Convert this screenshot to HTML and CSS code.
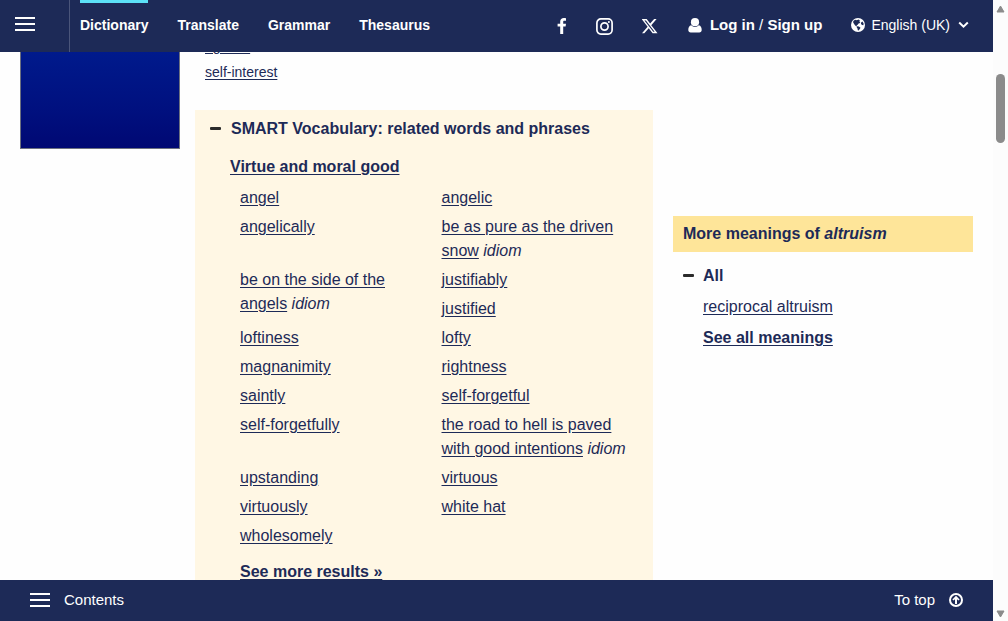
FILE: index.html
```html
<!DOCTYPE html>
<html lang="en">
<head>
<meta charset="utf-8">
<meta name="viewport" content="width=device-width, initial-scale=1">
<title>altruism | Dictionary</title>
<link rel="stylesheet" href="styles.css">
</head>
<body>
<div class="page">
  <header class="header">
    <button class="menu-button" type="button" aria-label="Open menu"><span class="bars"></span></button>
    <nav class="nav">
      <a class="nav-link active" href="#">Dictionary</a>
      <a class="nav-link" href="#">Translate</a>
      <a class="nav-link" href="#">Grammar</a>
      <a class="nav-link" href="#">Thesaurus</a>
    </nav>
    <div class="social">
      <a class="social-link" href="#" aria-label="Facebook"><svg width="10" height="16" viewBox="0 0 10 16"><path fill="currentColor" d="M9 .2v2.600H7.500C6.400 2.800 6.200 3.300 6.200 4v1.700H9l-.4 2.800H6.200V16H3.200V8.500H.6V5.700h2.600V3.500C3.200 1.200 4.700 0 6.800 0 7.800 0 8.700.1 9 .2z"/></svg></a>
      <a class="social-link" href="#" aria-label="Instagram"><svg width="17" height="17" viewBox="0 0 17 17" fill="none" stroke="currentColor"><rect x="0.900" y="0.900" width="15.200" height="15.200" rx="4" stroke-width="1.700"/><circle cx="8.500" cy="8.500" r="3.600" stroke-width="1.700"/><circle cx="12.900" cy="4.100" r="1" fill="currentColor" stroke="none"/></svg></a>
      <a class="social-link" href="#" aria-label="X"><svg width="16" height="16" viewBox="0 0 24 24"><path fill="currentColor" d="M18.200 1.500h3.700l-8 9.200L23.300 23h-7.400l-5.800-7.600L3.500 23H-.2l8.600-9.800L-.6 1.500H7l5.200 6.900zm-1.300 19.300h2L5.800 3.600H3.600z"/></svg></a>
    </div>
    <a class="login" href="#">
      <svg width="14" height="15" viewBox="0 0 14 15"><circle cx="7" cy="4.200" r="4.100" fill="currentColor"/><path fill="currentColor" d="M3.200 7.300a5 5 0 0 0 7.600 0c2.100.4 2.900 2.500 2.900 4.700 0 1.500-1 2.500-2.400 2.500H2.700C1.300 14.500.3 13.500.3 12c0-2.200.8-4.300 2.900-4.700z"/></svg>
      <span>Log in <span class="slash">/</span> Sign up</span>
    </a>
    <button class="language" type="button">
      <svg width="14" height="14" viewBox="0 0 14 14"><circle cx="7" cy="7" r="7" fill="currentColor"/><path class="land" d="M2.800 2.600 4.500 1.800l1.200.5L7.500 1.400l1.400 1-.5 1.300.9.600-1.200 1.300-1 .2-.5 1.200-1.200-.1.800 1.200-.9.300-1.500-1.300-1-1.500-.8-1.500z"/><path class="land" d="m6.200 8.300 1.700.2 1.600 1.200-.7 1.400-1.200 1.400-.8-.2-.3-1.800-.8-1.100z"/><path class="land" d="m10.100 4.500 1.300-.9 1.200 1.900-.2 1.700-1.300-.3-1.100-.8z"/></svg>
      <span>English (UK)</span>
      <svg class="chevron" width="11" height="8" viewBox="0 0 11 8"><path d="M1.200 1.500 5.500 5.700 9.800 1.500" fill="none" stroke="currentColor" stroke-width="2"/></svg>
    </button>
  </header>

  <main class="main">
    <div class="ad" role="img" aria-label="Advertisement"></div>
    <article class="article">
      <ul class="synonyms">
        <li><a href="#">egoism</a></li>
        <li><a href="#">self-interest</a></li>
      </ul>
      <section class="smart">
        <h2 class="toggle-title"><span class="minus"></span>SMART Vocabulary: related words and phrases</h2>
        <h3 class="topic"><a href="#">Virtue and moral good</a></h3>
        <ul class="words">
          <li><a href="#">angel</a></li>
          <li><a href="#">angelic</a></li>
          <li><a href="#">angelically</a></li>
          <li><a href="#">be as pure as the driven snow</a> <i>idiom</i></li>
          <li class="tall"><a href="#">be on the side of the angels</a> <i>idiom</i></li>
          <li><a href="#">justifiably</a></li>
          <li><a href="#">justified</a></li>
          <li><a href="#">loftiness</a></li>
          <li><a href="#">lofty</a></li>
          <li><a href="#">magnanimity</a></li>
          <li><a href="#">rightness</a></li>
          <li><a href="#">saintly</a></li>
          <li><a href="#">self-forgetful</a></li>
          <li><a href="#">self-forgetfully</a></li>
          <li><a href="#">the road to hell is paved with good intentions</a> <i>idiom</i></li>
          <li><a href="#">upstanding</a></li>
          <li><a href="#">virtuous</a></li>
          <li><a href="#">virtuously</a></li>
          <li><a href="#">white hat</a></li>
          <li><a href="#">wholesomely</a></li>
        </ul>
        <a class="more" href="#">See more results »</a>
      </section>
    </article>
    <aside class="aside">
      <h2 class="aside-title">More meanings of <i>altruism</i></h2>
      <div class="meanings">
        <h3 class="toggle-title compact"><span class="minus"></span>All</h3>
        <ul class="meaning-list">
          <li><a href="#">reciprocal altruism</a></li>
          <li><a class="strong" href="#">See all meanings</a></li>
        </ul>
      </div>
    </aside>
  </main>

  <footer class="footer">
    <button class="footer-button" type="button"><span class="bars"></span>Contents</button>
    <a class="footer-button to-top" href="#">To top
      <svg width="14" height="14" viewBox="0 0 14 14"><circle cx="7" cy="7" r="6" fill="none" stroke="currentColor" stroke-width="2"/><path fill="currentColor" d="M7 2.700 10.600 6.500 9.600 7.400 8 6.300V11H6V6.300L4.400 7.400 3.400 6.500z"/></svg>
    </a>
  </footer>
</div>
<div class="scrollbar" aria-hidden="true">
  <svg width="9" height="8" viewBox="0 0 9 8"><path d="M4.500 1 8 7H1z" fill="currentColor" stroke="currentColor" stroke-linejoin="round"/></svg>
  <div class="track"><div class="thumb"></div></div>
  <svg width="9" height="8" viewBox="0 0 9 8"><path d="M4.500 7 8 1H1z" fill="currentColor" stroke="currentColor" stroke-linejoin="round"/></svg>
</div>
</body>
</html>
```
FILE: styles.css
```css
:root {
  --navy: #1d2a57;
  --cream: #fff7e4;
}

* {
  box-sizing: border-box;
}

body {
  display: flex;
  height: 100vh;
  margin: 0;
  overflow: hidden;
  background: #fefefe;
  color: var(--navy);
  font: 16px/24px "Liberation Sans", Arial, sans-serif;
}

a {
  color: inherit;
  text-underline-offset: 2px;
}

button {
  padding: 0;
  border: 0;
  background: none;
  color: inherit;
  font: inherit;
}

h2,
h3,
ul {
  margin: 0;
  padding: 0;
  font-size: 16px;
  list-style: none;
}

svg {
  display: block;
  flex: none;
}

.page {
  display: flex;
  flex: 1;
  flex-direction: column;
  min-width: 0;
}

.header {
  display: flex;
  flex: none;
  align-items: center;
  height: 52px;
  padding-right: 24px;
  background: var(--navy);
  color: #fff;
  font-size: 14px;
}

.menu-button {
  align-self: stretch;
  width: 70px;
  padding: 0 0 4px 15px;
  border-right: 1px solid #4a557a;
}

.bars {
  display: block;
  width: 20px;
  height: 14px;
  border-top: 2px solid #fff;
  border-bottom: 2px solid #fff;
  background: linear-gradient(#fff, #fff) center / 100% 2px no-repeat;
}

.nav {
  display: flex;
  align-self: stretch;
  gap: 29px;
  margin: 0 auto 0 10px;
}

.nav-link {
  padding-top: 10px;
  border-top: 3px solid transparent;
  font-weight: bold;
  text-decoration: none;
}

.nav-link.active {
  border-top-color: #5ce1f7;
}

.social {
  display: flex;
  align-items: center;
  gap: 29px;
  margin-right: 30px;
}

.login {
  display: flex;
  align-items: center;
  gap: 8px;
  margin-right: 29px;
  padding-bottom: 2px;
  font-size: 15px;
  font-weight: bold;
  text-decoration: none;
}

.slash {
  font-weight: normal;
}

.language {
  display: flex;
  align-items: center;
  gap: 6px;
  padding-bottom: 2px;
}

.land {
  fill: var(--navy);
}

.chevron {
  margin-left: 2px;
}

.main {
  display: flex;
  flex: 1;
  align-items: flex-start;
  min-height: 0;
  padding: 0 20px;
  overflow: hidden;
}

.ad {
  flex: none;
  width: 160px;
  height: 97px;
  margin-right: 15px;
  border: 1px solid #6b7080;
  border-top: 0;
  background: linear-gradient(#001a8c, #00107f 60%, #000873);
}

.article {
  flex: 1;
  min-width: 0;
  margin-right: 20px;
}

.synonyms {
  margin: -19px 0 25px;
  padding-left: 10px;
  font-size: 14px;
  line-height: 26px;
}

.smart {
  padding: 7px 20px 20px 35px;
  background: var(--cream);
}

.toggle-title {
  display: flex;
  align-items: center;
  gap: 10px;
  margin-left: -20px;
}

.toggle-title.compact {
  margin-left: 0;
}

.minus {
  width: 11px;
  height: 3px;
  margin-bottom: 2px;
  border-radius: 1px;
  background: #2b2b2b;
}

.topic {
  margin: 14px 0 7px;
}

.words {
  display: grid;
  grid-template-columns: 1fr 1fr;
}

.words li {
  padding: 0 0 5px 10px;
}

.words .tall {
  grid-row: span 2;
}

.more {
  display: block;
  margin: 7px 0 0 10px;
  font-weight: bold;
}

.aside {
  flex: none;
  width: 300px;
  padding-top: 164px;
}

.aside-title {
  padding: 6px 10px;
  background: #fee599;
}

.meanings {
  padding: 12px 10px;
}

.meanings .toggle-title {
  gap: 9px;
}

.meaning-list {
  display: grid;
  gap: 7px;
  padding: 7px 0 0 20px;
}

.strong {
  font-weight: bold;
}

.footer {
  display: flex;
  flex: none;
  align-items: center;
  justify-content: space-between;
  height: 41px;
  padding: 0 30px 2px;
  background: var(--navy);
  color: #fff;
  font-size: 15px;
}

.footer-button {
  display: flex;
  align-items: center;
  gap: 14px;
  text-decoration: none;
}

.scrollbar {
  display: flex;
  flex: none;
  flex-direction: column;
  align-items: center;
  width: 15px;
  padding: 5px 0 3px;
  background: #fcfcfc;
  color: #8b8b8b;
}

.track {
  flex: 1;
  padding-top: 61px;
}

.thumb {
  width: 9px;
  height: 69px;
  border-radius: 5px;
  background: #8b8b8b;
}
```
